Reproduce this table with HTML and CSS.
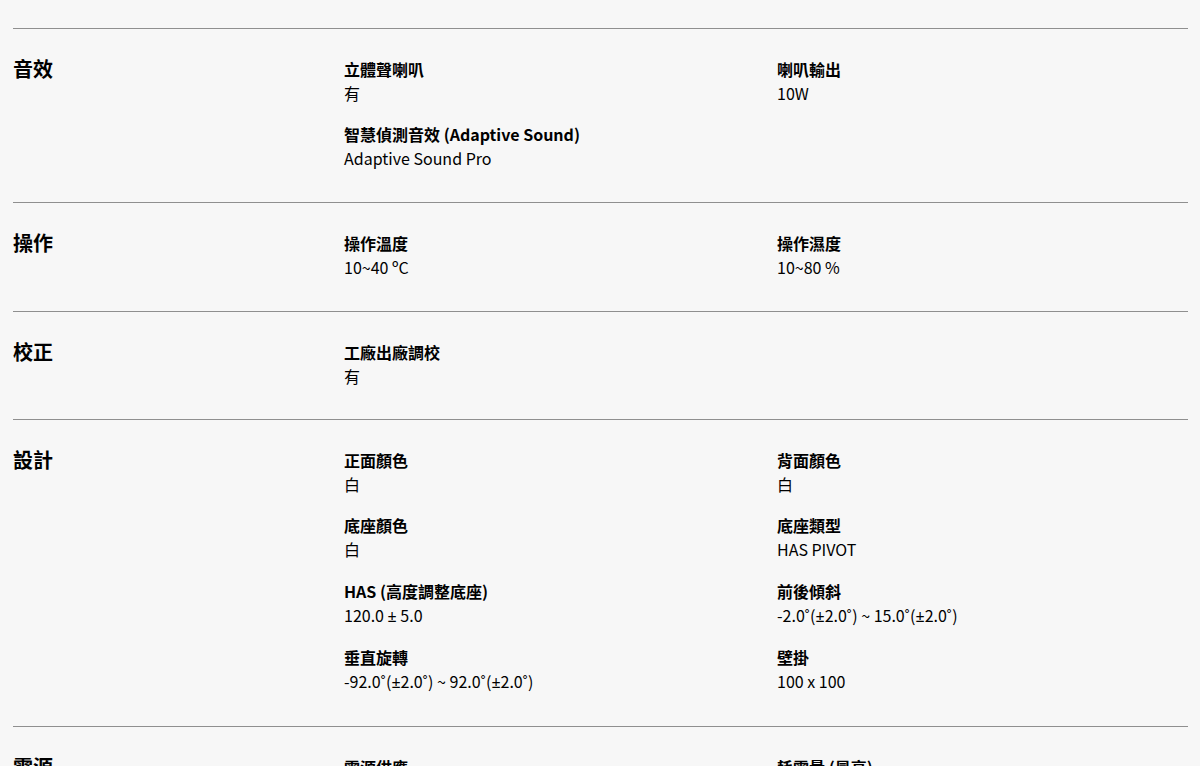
FILE: index.html
```html
<!DOCTYPE html>
<html lang="zh-Hant">
<head>
<meta charset="utf-8">
<title>規格</title>
<link rel="stylesheet" href="styles.css">
</head>
<body>
<div class="specs">
  <section class="spec">
    <h3 class="spec-title">音效</h3>
    <div class="spec-items">
      <div class="item"><div class="label">立體聲喇叭</div><div class="value">有</div></div>
      <div class="item"><div class="label">喇叭輸出</div><div class="value">10W</div></div>
      <div class="item"><div class="label">智慧偵測音效 (Adaptive Sound)</div><div class="value">Adaptive Sound Pro</div></div>
    </div>
  </section>
  <section class="spec">
    <h3 class="spec-title">操作</h3>
    <div class="spec-items">
      <div class="item"><div class="label">操作溫度</div><div class="value">10~40 ºC</div></div>
      <div class="item"><div class="label">操作濕度</div><div class="value">10~80 %</div></div>
    </div>
  </section>
  <section class="spec">
    <h3 class="spec-title">校正</h3>
    <div class="spec-items">
      <div class="item"><div class="label">工廠出廠調校</div><div class="value">有</div></div>
    </div>
  </section>
  <section class="spec">
    <h3 class="spec-title">設計</h3>
    <div class="spec-items">
      <div class="item"><div class="label">正面顏色</div><div class="value">白</div></div>
      <div class="item"><div class="label">背面顏色</div><div class="value">白</div></div>
      <div class="item"><div class="label">底座顏色</div><div class="value">白</div></div>
      <div class="item"><div class="label">底座類型</div><div class="value">HAS PIVOT</div></div>
      <div class="item"><div class="label">HAS (高度調整底座)</div><div class="value">120.0 <span class="sym">±</span> 5.0</div></div>
      <div class="item"><div class="label">前後傾斜</div><div class="value">-2.0˚(<span class="sym">±</span>2.0˚) ~ 15.0˚(<span class="sym">±</span>2.0˚)</div></div>
      <div class="item"><div class="label">垂直旋轉</div><div class="value">-92.0˚(<span class="sym">±</span>2.0˚) ~ 92.0˚(<span class="sym">±</span>2.0˚)</div></div>
      <div class="item"><div class="label">壁掛</div><div class="value">100 x 100</div></div>
    </div>
  </section>
  <section class="spec">
    <h3 class="spec-title">電源</h3>
    <div class="spec-items">
      <div class="item"><div class="label">電源供應</div><div class="value">AC 100~240V</div></div>
      <div class="item"><div class="label">耗電量 (最高)</div><div class="value">—</div></div>
    </div>
  </section>
</div>
</body>
</html>
```

FILE: styles.css
```css
html, body {
  margin: 0;
  padding: 0;
  background: #f7f7f7;
  color: #000;
  font-family: "Noto Sans CJK TC", sans-serif;
}

.specs {
  padding: 28px 12px 0 13px;
}

.spec {
  display: grid;
  grid-template-columns: 331px 1fr;
  border-top: 1px solid #8f8f8f;
  padding: 28px 0 31.6px;
}

.spec-title {
  margin: 0;
  font-size: 20px;
  line-height: 24px;
  font-weight: 700;
}

.spec-items {
  display: grid;
  grid-template-columns: 433px 1fr;
  row-gap: 17.33px;
}

.label {
  font-size: 16px;
  line-height: 24px;
  font-weight: 700;
}

.value {
  font-size: 16px;
  line-height: 24px;
  font-weight: 400;
}

.sym {
  font-family: "Noto Sans", sans-serif;
}
```
